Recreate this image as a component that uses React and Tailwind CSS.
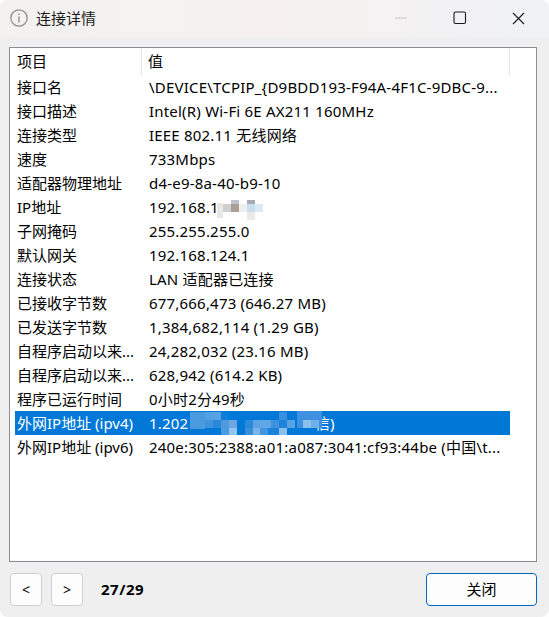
const rows = [
  ["接口名", "\\DEVICE\\TCPIP_{D9BDD193-F94A-4F1C-9DBC-9..."],
  ["接口描述", "Intel(R) Wi-Fi 6E AX211 160MHz"],
  ["连接类型", "IEEE 802.11 无线网络"],
  ["速度", "733Mbps"],
  ["适配器物理地址", "d4-e9-8a-40-b9-10"],
  ["IP地址", "192.168.1"],
  ["子网掩码", "255.255.255.0"],
  ["默认网关", "192.168.124.1"],
  ["连接状态", "LAN 适配器已连接"],
  ["已接收字节数", "677,666,473 (646.27 MB)"],
  ["已发送字节数", "1,384,682,114 (1.29 GB)"],
  ["自程序启动以来...", "24,282,032 (23.16 MB)"],
  ["自程序启动以来...", "628,942 (614.2 KB)"],
  ["程序已运行时间", "0小时2分49秒"],
  ["外网IP地址 (ipv4)", "1.202"],
  ["外网IP地址 (ipv6)", "240e:305:2388:a01:a087:3041:cf93:44be (中国\\t..."],
];

// mosaic cells of the redacted addresses: [left, top, width, height, colour], relative to the row
const ipCells = [
  [202, 8, 6, 15, "#e8e8e6"],
  [208, 9, 8, 8, "#d0d0d0"],
  [216, 5, 8, 4, "#bfc2cc"],
  [216, 9, 8, 8, "#a9a095"],
  [224, 9, 8, 8, "#eeeeee"],
  [232, 5, 8, 4, "#a8a8b4"],
  [232, 9, 8, 8, "#c8dff0"],
  [232, 17, 8, 8, "#ece8e4"],
  [240, 9, 8, 8, "#dce9f5"],
];

const wanCells = [
  [175, 1, 15, 17, "#4a9ae0"],
  [190, 1, 8, 8, "#54a0e3"],
  [198, 1, 8, 8, "#58a2e3"],
  [206, 1, 8, 8, "#0f7ed9"],
  [190, 9, 8, 8, "#3f92dd"],
  [198, 9, 8, 8, "#2a88db"],
  [206, 9, 8, 8, "#5098e0"],
  [214, 9, 8, 8, "#6ea6e2"],
  [230, 9, 8, 8, "#2d89dc"],
  [238, 9, 8, 8, "#5ea3e4"],
  [206, 17, 8, 7, "#4b9be2"],
  [214, 17, 8, 7, "#93c4ee"],
  [230, 17, 8, 7, "#3a8fdd"],
  [238, 17, 8, 7, "#7ab5ea"],
  [245, 9, 11, 8, "#60a5e6"],
  [256, 9, 8, 8, "#3e91dd"],
  [264, 1, 8, 8, "#3a8fdd"],
  [264, 9, 8, 8, "#1b83da"],
  [272, 9, 8, 8, "#5ba2e4"],
  [245, 17, 8, 7, "#4296df"],
  [253, 17, 11, 7, "#1a82da"],
  [264, 17, 8, 7, "#8dbfec"],
  [282, 0, 25, 17, "#3f90df"],
  [288, 9, 8, 8, "#8cc0ec"],
  [296, 9, 8, 8, "#6fafe8"],
];

const Mosaic = ({ cells }) => (
  <>
    {cells.map(([left, top, width, height, background], i) => (
      <span key={i} className="absolute" style={{ left, top, width, height, background }}></span>
    ))}
  </>
);

const App = () => {
  return (
    <div className="w-[549px] h-[617px] bg-white overflow-hidden font-['Noto_Sans','Noto_Sans_CJK_SC',sans-serif] text-[15px] text-black">
      <div className="w-full h-full bg-[#efefef] rounded-lg flex flex-col">
        {/* Title bar */}
        <div className="h-[37px] shrink-0 flex items-center pl-[10px] pb-px rounded-t-lg bg-gradient-to-r from-[#f3f2f1] via-[#f6f1ef] to-[#f0f2f6]">
          <svg width="18" height="18" viewBox="0 0 18 18" fill="none" stroke="#8a8a8a">
            <circle cx="9" cy="9" r="8.2" strokeWidth="1.2" />
            <path d="M9 7.5v6M9 4.4v1.6" strokeWidth="1.3" />
          </svg>
          <span className="ml-2 text-[#1a1a1a]">连接详情</span>
          <svg className="ml-auto" width="12" height="12" viewBox="0 0 12 12" stroke="#c6c6c6">
            <path d="M0 6h12" />
          </svg>
          <svg className="ml-[46px]" width="14" height="14" viewBox="0 0 14 14" fill="none" stroke="#1a1a1a" strokeWidth="1.1">
            <rect x="1" y="1" width="11.5" height="11.5" rx="1.5" />
          </svg>
          <svg className="ml-[45px] mr-[24px]" width="13" height="13" viewBox="0 0 13 13" fill="none" stroke="#1a1a1a" strokeWidth="1.1">
            <path d="M1 1l11 11M12 1L1 12" />
          </svg>
        </div>

        {/* Table */}
        <div className="ml-[9px] mr-[12px] mt-[10px] h-[515px] border border-[#8b8b93] bg-white pl-[5px] pr-[26px]">
          <div className="h-[27px] flex items-center">
            <span className="w-[127px] pl-[2px] h-full flex items-center border-r border-[#e5e5e5]">项目</span>
            <span className="pl-[6px]">值</span>
            <span className="ml-auto h-full border-r border-[#e5e5e5]"></span>
          </div>
          {rows.map((row, i) => (
            <div key={i} className={`h-[24px] flex items-center whitespace-nowrap relative ${i === 14 ? "bg-[#0078d7] text-white" : ""}`}>
              <span className="w-[127px] pl-[2px]">{row[0]}</span>
              <span className="pl-[7px] tracking-[0.2px]">{row[1]}</span>
              {i === 5 && <Mosaic cells={ipCells} />}
              {i === 14 && <span className="absolute left-[300px]">信)</span>}
              {i === 14 && <Mosaic cells={wanCells} />}
            </div>
          ))}
        </div>

        {/* Footer */}
        <div className="flex items-center mt-[11px] pl-[10px] pr-[12px]">
          <button className="w-[32px] h-[33px] rounded border border-[#d0d0d0] bg-[#fdfdfd] text-[14px]">&lt;</button>
          <button className="w-[32px] h-[33px] ml-[9px] rounded border border-[#d0d0d0] bg-[#fdfdfd] text-[14px]">&gt;</button>
          <span className="ml-[18px] font-bold tracking-[0.5px]">27/29</span>
          <button className="ml-auto w-[111px] h-[33px] rounded border border-[#0067c0] bg-[#fdfdfd]">关闭</button>
        </div>
      </div>
    </div>
  );
};

export default App;
